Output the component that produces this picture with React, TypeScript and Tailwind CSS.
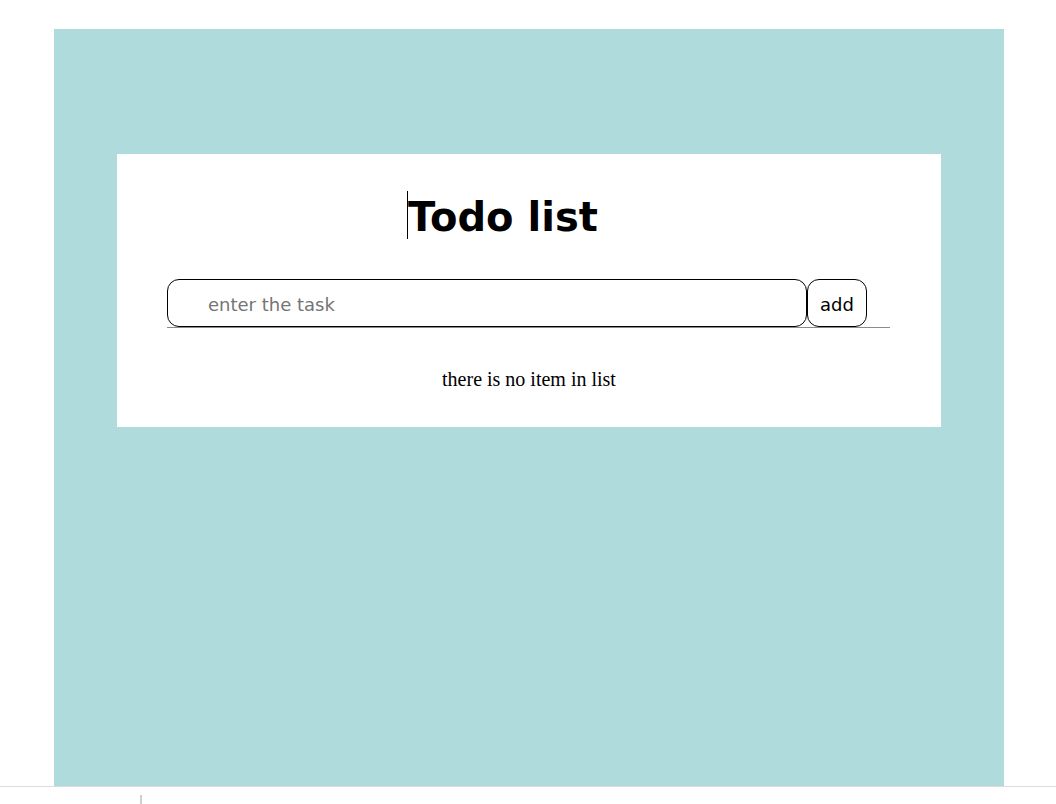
export default function App() {
  return (
    <div className="w-[1056px] h-[804px] bg-white overflow-hidden flex flex-col">
      <div className="pt-[29px] pl-[54px] h-[786px]">
        <div className="w-[950px] h-[757px] bg-[#b0dbdc] pt-[125px] pl-[63px]">
          {/* Card */}
          <div className="w-[824px] h-[273px] bg-white flex flex-col">
            <div className="pt-[35px] pl-[290px] flex items-start">
              <span className="w-px h-[48px] bg-black mt-[2px]" />
              <h1 className="font-['DejaVu_Sans',sans-serif] font-bold text-[40px] leading-[56px] text-black">
                Todo list
              </h1>
            </div>
            <div className="mt-[34px] ml-[50px] w-[723px] border-b border-[#8a8a8a] flex h-[49px]">
              <input
                placeholder="enter the task"
                className="w-[640px] h-[48px] border border-black rounded-[12px] pl-[40px] pt-[3px] text-[18px] font-['DejaVu_Sans',sans-serif] text-black placeholder:text-[#757575] outline-none"
              />
              <button className="w-[60px] h-[48px] border border-black rounded-[12px] pt-[3px] text-[18px] font-['DejaVu_Sans',sans-serif] text-black bg-white">
                add
              </button>
            </div>
            <p className="mt-[36px] text-center font-['Liberation_Serif',serif] text-[20px] leading-[30px] text-black">
              there is no item in list
            </p>
          </div>
        </div>
      </div>
      <div className="border-t border-[#dcdcdc] flex-1 pl-[140px] pt-[8px]">
        <span className="block w-[2px] h-[9px] bg-[#cfcfcf]" />
      </div>
    </div>
  );
}
